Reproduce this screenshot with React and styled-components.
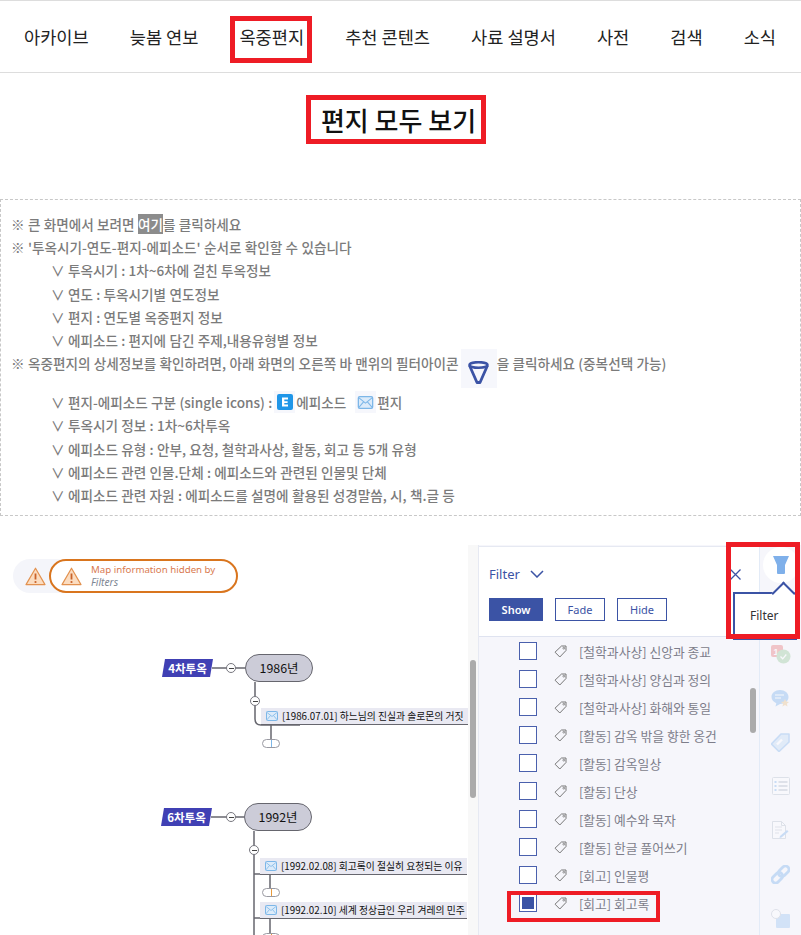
import React from 'react';
import styled, { createGlobalStyle } from 'styled-components';

const Global = createGlobalStyle`
  html, body { margin: 0; padding: 0; background: #fff; overflow: hidden; }
  body { font-family: "Noto Sans CJK KR", "Noto Sans", sans-serif; }
  * { box-sizing: border-box; }
`;

const Page = styled.div`
  width: 801px;
  height: 935px;
  overflow: hidden;
`;

const Nav = styled.nav`
  height: 73px;
  border-top: 1px solid #ddd;
  border-bottom: 1px solid #ddd;
  padding-left: 24px;
  display: flex;
  align-items: center;
  gap: 41px;
`;

const NavItem = styled.a`
  position: relative;
  font-size: 17.6px;
  color: #222;
  white-space: nowrap;
  ${(p) => p.$marked && `
    &::after {
      content: '';
      position: absolute;
      left: -9px; right: -8px; top: -8px; bottom: -14px;
      border: 5px solid #ee1c25;
    }
  `}
`;

const TitleRow = styled.div`
  height: 126px;
  padding: 22px 10px 0 0;
  display: flex;
  justify-content: center;
  align-items: flex-start;
`;

const Title = styled.h1`
  margin: 0;
  height: 49px;
  width: 180px;
  border: 5px solid #ee1c25;
  padding-left: 6px;
  font-size: 26px;
  font-weight: 500;
  color: #111;
  display: flex;
  align-items: center;
  justify-content: center;
  white-space: nowrap;
`;

const Notice = styled.div`
  height: 317px;
  border: 1px dashed #c8c8c8;
  padding: 12px 0 0 10px;
  color: #7b7b7b;
  font-size: 13.6px;
  font-weight: 500;
  word-spacing: 0.25px;
`;

const Line = styled.div`
  display: flex;
  align-items: center;
  height: ${(p) => p.$h || 23.3}px;
  margin-top: ${(p) => p.$gap || 0}px;
  padding-left: ${(p) => (p.$sub ? 40 : 0)}px;
  white-space: pre;
`;

const Mark = styled.span`
  background: #8c8c8c;
  color: #fff;
`;

const IconTile = styled.span`
  display: inline-flex;
  align-items: center;
  justify-content: center;
  background: #f6f7fc;
  width: ${(p) => p.$w}px;
  height: ${(p) => p.$h}px;
  margin: ${(p) => p.$m || '0'};
  padding-top: ${(p) => p.$pt || 0}px;
  flex: none;
`;

const MapArea = styled.section`
  margin-top: 29px;
  height: 390px;
  display: flex;
`;

const Canvas = styled.div`
  position: relative;
  width: 478px;
  overflow: hidden;
`;

const Links = styled.svg`
  position: absolute;
  inset: 0;
`;

const Strip = styled.div`
  position: absolute;
  top: 0; right: 0; bottom: 0;
  width: 10px;
  background: #f8f8f8;
`;

const ScrollThumb = styled.div`
  position: absolute;
  border-radius: 3px;
  background: #ababab;
  width: 6px;
  height: ${(p) => p.$h}px;
  top: ${(p) => p.$top}px;
  right: ${(p) => p.$right}px;
`;

const AlertBack = styled.div`
  position: absolute;
  left: 13px; top: 14px;
  width: 60px; height: 34px;
  border-radius: 17px;
  background: #f4f5fa;
  display: flex;
  align-items: center;
  padding-left: 12px;
`;

const AlertChip = styled.div`
  position: absolute;
  left: 49px; top: 14px;
  width: 189px; height: 34px;
  border: 2px solid #d9751e;
  border-radius: 17px;
  background: #fff;
  display: flex;
  align-items: center;
  gap: 9px;
  padding-left: 10px;
`;

const AlertText = styled.div`
  font-family: "Noto Sans", sans-serif;
  font-size: 9.7px;
  line-height: 12px;
  color: #d97a50;
  em { display: block; color: #7e8794; font-size: 10.2px; }
`;

const Tag = styled.div`
  position: absolute;
  left: ${(p) => p.$x}px;
  top: ${(p) => p.$y}px;
  width: 51px;
  height: 18px;
  background: #4040b4;
  clip-path: polygon(3px 0, 100% 0, 48px 100%, 0 100%);
  color: #fff;
  font-size: 11.5px;
  font-weight: 700;
  display: flex;
  align-items: center;
  justify-content: center;
`;

const Year = styled.div`
  position: absolute;
  left: ${(p) => p.$x}px;
  top: ${(p) => p.$y}px;
  width: 68px;
  height: 28px;
  border: 1.5px solid #66666e;
  border-radius: 14px;
  background: #ccccd8;
  color: #111;
  font-size: 12.4px;
  display: flex;
  align-items: center;
  justify-content: center;
`;

const Toggle = styled.div`
  position: absolute;
  left: ${(p) => p.$x - 5}px;
  top: ${(p) => p.$y - 5}px;
  width: 10px;
  height: 10px;
  border: 1px solid #77777f;
  border-radius: 50%;
  background: #fff;
  display: flex;
  align-items: center;
  justify-content: center;
  &::before { content: ''; width: 5px; height: 1px; background: #444; }
`;

const Letter = styled.div`
  position: absolute;
  left: ${(p) => p.$x}px;
  top: ${(p) => p.$y}px;
  width: 207px;
  height: 17px;
  background: #e9e9f2;
  border-bottom: 1px solid #66666e;
  color: #111;
  font-size: 9.8px;
  display: flex;
  align-items: center;
  gap: 4px;
  padding-left: 5px;
  white-space: nowrap;
`;

const Pill = styled.div`
  position: absolute;
  left: ${(p) => p.$x}px;
  top: ${(p) => p.$y}px;
  width: 18px;
  height: 9px;
  border: 1px solid #9a9aa2;
  border-radius: 5px;
  background: #fff;
  &::before {
    content: '';
    position: absolute;
    left: 8px; top: 0;
    width: 1px; height: 7px;
    background: ${(p) => p.$c};
  }
`;

const Panel = styled.div`
  position: relative;
  width: 281px;
  background: #f6f6fb;
  border-left: 1px solid #e6e9f2;
  overflow: hidden;
`;

const PanelHead = styled.div`
  height: 91px;
  margin-top: 1px;
  background: #fff;
  border-top: 1px solid #e6e9f2;
  border-bottom: 1px solid #dfe3f0;
  padding: 17px 0 0 10px;
`;

const HeadRow = styled.div`
  width: 252px;
  height: 20px;
  display: flex;
  align-items: center;
  justify-content: space-between;
`;

const HeadTitle = styled.div`
  display: flex;
  align-items: center;
  gap: 10px;
  font-family: "Noto Sans", sans-serif;
  font-size: 13px;
  color: #3b53a5;
`;

const ModeRow = styled.div`
  display: flex;
  gap: 12px;
  margin-top: 14px;
`;

const ModeBtn = styled.button`
  width: ${(p) => (p.$active ? 54 : 50)}px;
  height: 23px;
  padding: 0;
  border: 1px solid #3b53a5;
  background: ${(p) => (p.$active ? '#3b53a5' : '#fff')};
  color: ${(p) => (p.$active ? '#fff' : '#3b53a5')};
  font-family: "Noto Sans", sans-serif;
  font-size: 11px;
  font-weight: ${(p) => (p.$active ? 600 : 400)};
`;

const List = styled.ul`
  list-style: none;
  margin: 0;
  padding: 0 0 0 40px;
`;

const Row = styled.li`
  position: relative;
  height: 28px;
  display: flex;
  align-items: center;
  font-size: 12.8px;
  color: #7d7d8a;
  white-space: nowrap;
  ${(p) => p.$marked && `
    &::after {
      content: '';
      position: absolute;
      left: -12px; top: 2px;
      width: 145px; height: 23px;
      border: 4px solid #ee1c25;
    }
  `}
`;

const Check = styled.span`
  width: 18px;
  height: 18px;
  border: 1px solid #4a60ad;
  background: #fff;
  display: flex;
  align-items: center;
  justify-content: center;
  margin-right: 17px;
  &::before {
    content: '';
    width: 12px;
    height: 12px;
    background: ${(p) => (p.$on ? '#3b53a5' : 'transparent')};
  }
`;

const TagIcon = styled.span`
  line-height: 0;
  margin-right: 12px;
`;

const Rail = styled.aside`
  width: 42px;
  padding-top: 2px;
  background: #f6f6fb;
  border-left: 1px solid #e3ebf7;
  display: flex;
  flex-direction: column;
  align-items: center;
`;

const RailIcons = styled.div`
  margin-top: 49px;
  display: flex;
  flex-direction: column;
  align-items: center;
  opacity: 0.26;
`;

const RailSlot = styled.div`
  height: 44px;
  display: flex;
  align-items: center;
  justify-content: center;
`;

const FilterBubble = styled.div`
  width: 36px;
  height: 36px;
  flex: none;
  border-radius: 50%;
  background: #fff;
  display: flex;
  align-items: center;
  justify-content: center;
`;

const Tooltip = styled.div`
  position: absolute;
  left: 733px;
  top: 592px;
  width: 64px;
  height: 48px;
  background: #fff;
  border: 1px solid #3b53a5;
  border-width: 2px 0 2px 2px;
  padding: 13px 0 0 15px;
  font-family: "Noto Sans", sans-serif;
  font-size: 12px;
  color: #333;
  &::before {
    content: '';
    position: absolute;
    left: 40px;
    top: -9px;
    width: 15px;
    height: 15px;
    background: #fff;
    border-left: 2px solid #3b53a5;
    border-top: 2px solid #3b53a5;
    transform: rotate(45deg);
  }
`;

const RedFrame = styled.div`
  position: absolute;
  left: 726px;
  top: 542px;
  width: 74px;
  height: 97px;
  border: 5px solid #ee1c25;
`;

const Mail = ({ w = 12, h = 10 }) => (
  <svg width={w} height={h} viewBox="0 0 24 20" style={{ flex: 'none' }}>
    <rect x="1" y="1" width="22" height="18" rx="2" fill="#dcebfa" stroke="#7db7e8" strokeWidth="2" />
    <path d="M1.5 2.5 12 11l10.5-8.5M1.5 18 9 9M22.5 18 15 9" fill="none" stroke="#7db7e8" strokeWidth="1.6" />
  </svg>
);

const Funnel = () => (
  <svg width="21" height="23" viewBox="0 0 21 23">
    <ellipse cx="10.5" cy="4" rx="9" ry="2.8" fill="none" stroke="#3b53a5" strokeWidth="2.6" />
    <path d="M1.500 4.500 9 21.500h3L19.500 4.500" fill="none" stroke="#3b53a5" strokeWidth="2.800" strokeLinejoin="round" />
  </svg>
);

const Price = () => (
  <svg width="13" height="13" viewBox="0 0 13 13">
    <path d="M7.5 1H12v4.5L5.8 12 1 7.2z" fill="none" stroke="#777" strokeWidth="1" strokeLinejoin="round" />
    <circle cx="9.8" cy="3.2" r="0.9" fill="none" stroke="#777" strokeWidth="0.8" />
  </svg>
);

const Warn = () => (
  <svg width="21" height="19" viewBox="0 0 21 19" style={{ flex: 'none' }}>
    <path d="M10.5 1.2 20 17.6H1z" fill="#fbdcc0" stroke="#e2914f" strokeWidth="1.2" strokeLinejoin="round" />
    <path d="M10.5 6.5v6" stroke="#c9622a" strokeWidth="1.8" />
    <circle cx="10.5" cy="15" r="1.1" fill="#c9622a" />
  </svg>
);

const railIcons = [
  <svg key="badge" width="20" height="19" viewBox="0 0 20 19">
    <rect x="0" y="0" width="12" height="12" rx="2" fill="#e03a3a" />
    <text x="5" y="9.500" fontSize="9" fontWeight="700" textAnchor="middle" fill="#fff" fontFamily="Liberation Sans">1</text>
    <circle cx="12.500" cy="11.500" r="7" fill="#6cb26c" />
    <path d="M9.500 11.500l2.200 2.300 3.600-4.300" fill="none" stroke="#fff" strokeWidth="1.300" />
  </svg>,
  <svg key="chat" width="19" height="19" viewBox="0 0 19 19">
    <path d="M9 1c4.800 0 8.500 2.900 8.500 7S13.800 15 9 15l-4.500 2.500.8-3.300C2.600 13 .5 10.800.5 8 .5 3.900 4.200 1 9 1z" fill="#3f92e6" />
    <path d="M4 6h9M4 9h6" stroke="#fff" strokeWidth="1.200" />
    <path d="m14 10 1.200 2.600 2.800.3-2.100 1.900.6 2.800-2.500-1.500-2.500 1.500.6-2.800-2.100-1.900 2.800-.3z" fill="#e0a850" />
  </svg>,
  <svg key="tag" width="19" height="19" viewBox="0 0 19 19">
    <path d="M10 1h8v8L8 18.500.5 11z" fill="#a9cdf3" stroke="#4c96e6" strokeWidth="1.600" strokeLinejoin="round" />
    <path d="M6 11.500 11 6.500" stroke="#fff" strokeWidth="2.400" />
  </svg>,
  <svg key="list" width="18" height="18" viewBox="0 0 18 18">
    <rect x="0.5" y="0.5" width="17" height="17" rx="1" fill="#fff" stroke="#9aa6b8" />
    <path d="M6.500 5h9M6.500 9h9M6.500 13h9" stroke="#7f8da3" strokeWidth="1.400" />
    <path d="M2.500 5h2M2.500 9h2M2.500 13h2" stroke="#4c96e6" strokeWidth="1.800" />
  </svg>,
  <svg key="note" width="17" height="18" viewBox="0 0 17 18">
    <path d="M.5.500h9l4 4v13H.5z" fill="#fff" stroke="#9aa6b8" />
    <path d="M9.500.500v4h4" fill="none" stroke="#9aa6b8" />
    <path d="M3 6h7M3 9h7M3 12h4" stroke="#a5afbf" />
    <path d="M8 15l7-6 1.500 1.500-7 6-2 .5z" fill="#4c96e6" />
  </svg>,
  <svg key="link" width="19" height="19" viewBox="0 0 19 19">
    <g fill="none" stroke="#3f92e6" strokeWidth="2.800" transform="rotate(-45 9.500 9.500)">
      <rect x="-1" y="6" width="12" height="7" rx="3.500" />
      <rect x="8" y="6" width="12" height="7" rx="3.500" />
    </g>
  </svg>,
  <svg key="shape" width="19" height="19" viewBox="0 0 19 19">
    <rect x="5" y="5" width="14" height="14" rx="1" fill="#6fadee" />
    <circle cx="5" cy="5" r="4.500" fill="#fff" stroke="#9aa6b8" />
  </svg>,
];

const navItems = ['아카이브', '늦봄 연보', '옥중편지', '추천 콘텐츠', '사료 설명서', '사전', '검색', '소식'];

const filterRows = [
  '[철학과사상] 신앙과 종교',
  '[철학과사상] 양심과 정의',
  '[철학과사상] 화해와 통일',
  '[활동] 감옥 밖을 향한 옹건',
  '[활동] 감옥일상',
  '[활동] 단상',
  '[활동] 예수와 목자',
  '[활동] 한글 풀어쓰기',
  '[회고] 인물평',
  '[회고] 회고록',
];

export default function App() {
  return (
    <Page>
      <Global />
      <Nav>
        {navItems.map((item) => (
          <NavItem key={item} $marked={item === '옥중편지'}>{item}</NavItem>
        ))}
      </Nav>
      <TitleRow>
        <Title>편지 모두 보기</Title>
      </TitleRow>
      <Notice>
        <Line>※ 큰 화면에서 보려면 <Mark>여기</Mark>를 클릭하세요</Line>
        <Line>※ '투옥시기-연도-편지-에피소드' 순서로 확인할 수 있습니다</Line>
        <Line $sub>∨ 투옥시기 : 1차~6차에 걸친 투옥정보</Line>
        <Line $sub>∨ 연도 : 투옥시기별 연도정보</Line>
        <Line $sub>∨ 편지 : 연도별 옥중편지 정보</Line>
        <Line $sub>∨ 에피소드 : 편지에 담긴 주제,내용유형별 정보</Line>
        <Line $h={23}>
          ※ 옥중편지의 상세정보를 확인하려면, 아래 화면의 오른쪽 바 맨위의 필터아이콘
          <IconTile $w={36} $h={39} $m="11px 0 0 2px" $pt={7}><Funnel /></IconTile>
          을 클릭하세요 (중복선택 가능)
        </Line>
        <Line $sub $h={23} $gap={16}>
          ∨ 편지-에피소드 구분 (single icons) :
          <IconTile $w={21} $h={22} $m="0 1px 0 2px">
            <svg width="16" height="16" viewBox="0 0 16 16">
              <rect width="16" height="16" rx="2" fill="#1f96e8" />
              <path d="M5 3.5h6v2H7.300v1.700h3.300v1.900H7.300v1.500H11v2H5z" fill="#fff" />
            </svg>
          </IconTile>
          에피소드
          <IconTile $w={21} $h={22} $m="0 1px 0 9px"><Mail w={17} h={13} /></IconTile>
          편지
        </Line>
        <Line $sub>∨ 투옥시기 정보 : 1차~6차투옥</Line>
        <Line $sub>∨ 에피소드 유형 : 안부, 요청, 철학과사상, 활동, 회고 등 5개 유형</Line>
        <Line $sub>∨ 에피소드 관련 인물.단체 : 에피소드와 관련된 인물및 단체</Line>
        <Line $sub>∨ 에피소드 관련 자원 : 에피소드를 설명에 활용된 성경말씀, 시, 책.글 등</Line>
      </Notice>
      <MapArea>
        <Canvas>
          <Links width="478" height="390">
            <g fill="none" stroke="#66666e" strokeWidth="1.500">
              <path d="M212 123H245" />
              <path d="M255 137V174q0 6 6 6H300" />
              <path d="M271 180V195" />
              <path d="M211 272H244" />
              <path d="M254 286V390" />
              <path d="M254 329H300M254 373H300" />
              <path d="M270 329V344M270 373V390" />
            </g>
          </Links>
          <AlertBack><Warn /></AlertBack>
          <AlertChip>
            <Warn />
            <AlertText>Map information hidden by<em>Filters</em></AlertText>
          </AlertChip>

          <Tag $x={162} $y={114}>4차투옥</Tag>
          <Toggle $x={231} $y={123} />
          <Year $x={245} $y={109}>1986년</Year>
          <Toggle $x={255} $y={156} />
          <Letter $x={261} $y={163}><Mail />[1986.07.01] 하느님의 진실과 솔로몬의 거짓</Letter>
          <Pill $x={262} $y={194} $c="#7db7e8" />

          <Tag $x={161} $y={263}>6차투옥</Tag>
          <Toggle $x={231} $y={272} />
          <Year $x={244} $y={258}>1992년</Year>
          <Toggle $x={254} $y={305} />
          <Letter $x={260} $y={313}><Mail />[1992.02.08] 회고록이 절실히 요청되는 이유</Letter>
          <Pill $x={262} $y={343} $c="#e89a3c" />
          <Letter $x={260} $y={357}><Mail />[1992.02.10] 세계 정상급인 우리 겨레의 민주</Letter>
          <Pill $x={262} $y={388} $c="#e89a3c" />

          <Strip />
          <ScrollThumb $top={115} $h={138} $right={2} />
        </Canvas>
        <Panel>
          <PanelHead>
            <HeadRow>
              <HeadTitle>
                Filter
                <svg width="14" height="8" viewBox="0 0 14 8">
                  <path d="M1 1l6 6 6-6" fill="none" stroke="#3b53a5" strokeWidth="1.500" />
                </svg>
              </HeadTitle>
              <svg width="11" height="11" viewBox="0 0 11 11">
                <path d="M.5.5l10 10M10.500.5l-10 10" stroke="#3b53a5" strokeWidth="1.300" />
              </svg>
            </HeadRow>
            <ModeRow>
              <ModeBtn $active>Show</ModeBtn>
              <ModeBtn>Fade</ModeBtn>
              <ModeBtn>Hide</ModeBtn>
            </ModeRow>
          </PanelHead>
          <List>
            {filterRows.map((label, i) => {
              const on = i === filterRows.length - 1;
              return (
                <Row key={label} $marked={on}>
                  <Check $on={on} />
                  <TagIcon><Price /></TagIcon>
                  {label}
                </Row>
              );
            })}
          </List>
          <ScrollThumb $top={143} $h={45} $right={3} />
        </Panel>
        <Rail>
          <FilterBubble>
            <svg width="16" height="18" viewBox="0 0 16 18">
              <path d="M0 0h16l-4 9v8q0 1-1 1H5q-1 0-1-1V9z" fill="#7fb0ea" />
            </svg>
          </FilterBubble>
          <RailIcons>
            {railIcons.map((icon) => <RailSlot key={icon.key}>{icon}</RailSlot>)}
          </RailIcons>
        </Rail>
      </MapArea>
      <Tooltip>Filter</Tooltip>
      <RedFrame />
    </Page>
  );
}
